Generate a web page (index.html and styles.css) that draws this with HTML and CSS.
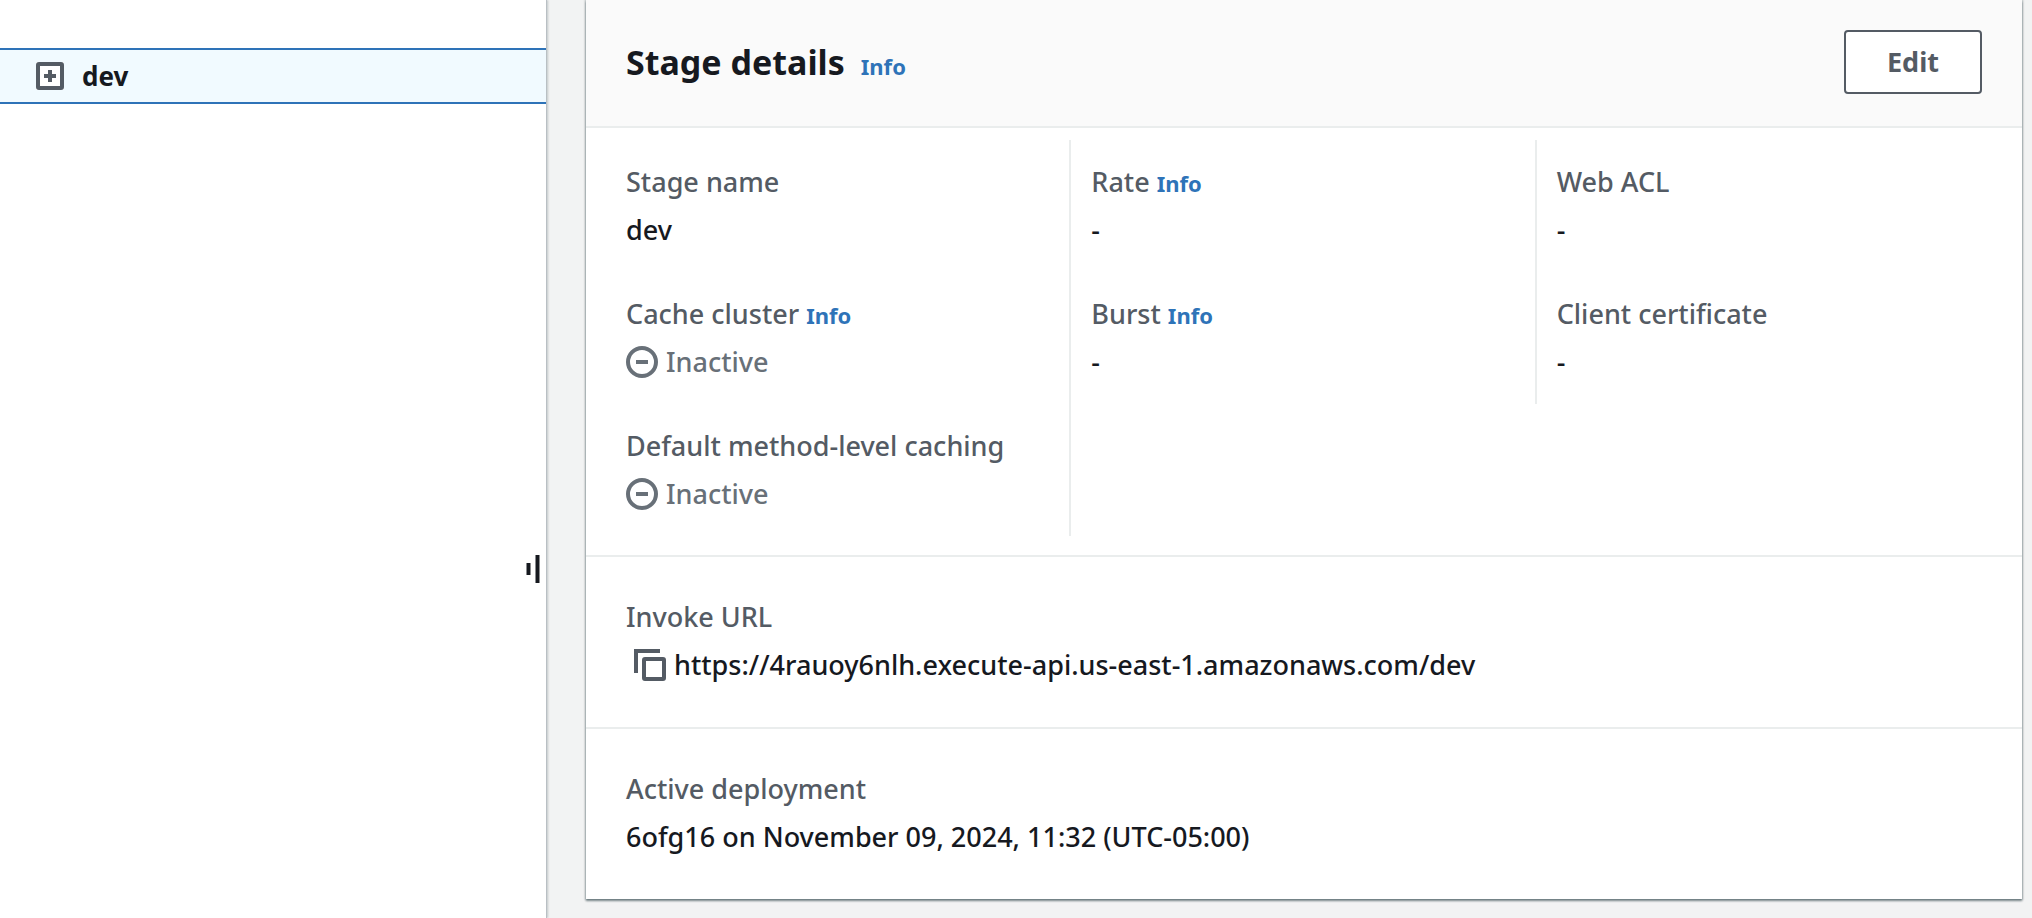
FILE: index.html
```html
<!DOCTYPE html>
<html lang="en">
<head>
<meta charset="utf-8">
<title>Stage details</title>
<link rel="stylesheet" href="styles.css">
</head>
<body>
<div class="layout">
  <nav class="sidebar" aria-label="Stages">
    <div class="stage-row">
      <button class="icon-button" type="button" aria-label="Expand dev">
        <svg class="expand-icon" viewBox="0 0 28 28" aria-hidden="true">
          <rect x="2" y="2" width="24" height="24" rx="1" fill="none" stroke="currentColor" stroke-width="4"/>
          <path d="M8 14h12M14 8v12" stroke="currentColor" stroke-width="4"/>
        </svg>
      </button>
      <a class="stage-link" href="#dev">dev</a>
    </div>
    <button class="resize-handle" type="button" aria-label="Resize panel">
      <svg class="resize-icon" viewBox="0 0 14 30" aria-hidden="true">
        <path d="M2.5 9v12M11.500 1v28" stroke="currentColor" stroke-width="4"/>
      </svg>
    </button>
  </nav>
  <main class="content">
    <section class="card">
      <header class="card-header">
        <div class="card-heading">
          <h2 class="card-title">Stage details</h2>
          <a class="info" href="#info">Info</a>
        </div>
        <button class="edit-button" type="button">Edit</button>
      </header>
      <div class="columns">
        <dl class="column">
          <div class="field"><dt>Stage name</dt><dd>dev</dd></div>
          <div class="field"><dt>Cache cluster <a class="info" href="#cache-info">Info</a></dt>
            <dd class="status">
              <svg class="status-icon" viewBox="0 0 32 32" aria-hidden="true"><circle cx="16" cy="16" r="14" fill="none" stroke="currentColor" stroke-width="4"/><path d="M10 16h12" stroke="currentColor" stroke-width="4"/></svg>
              Inactive</dd></div>
          <div class="field"><dt>Default method-level caching</dt>
            <dd class="status">
              <svg class="status-icon" viewBox="0 0 32 32" aria-hidden="true"><circle cx="16" cy="16" r="14" fill="none" stroke="currentColor" stroke-width="4"/><path d="M10 16h12" stroke="currentColor" stroke-width="4"/></svg>
              Inactive</dd></div>
        </dl>
        <dl class="column">
          <div class="field"><dt>Rate <a class="info" href="#rate-info">Info</a></dt><dd>-</dd></div>
          <div class="field"><dt>Burst <a class="info" href="#burst-info">Info</a></dt><dd>-</dd></div>
        </dl>
        <dl class="column">
          <div class="field"><dt>Web ACL</dt><dd>-</dd></div>
          <div class="field"><dt>Client certificate</dt><dd>-</dd></div>
        </dl>
      </div>
      <dl class="section">
        <dt>Invoke URL</dt>
        <dd class="copy-value">
          <button class="icon-button" type="button" aria-label="Copy invoke URL">
            <svg class="copy-icon" viewBox="0 0 32 32" aria-hidden="true">
              <path d="M2 24V2h24" fill="none" stroke="currentColor" stroke-width="4"/>
              <rect x="10" y="10" width="20" height="20" rx="1" fill="none" stroke="currentColor" stroke-width="4"/>
            </svg>
          </button>
          <span>https://4rauoy6nlh.execute-api.us-east-1.amazonaws.com/dev</span>
        </dd>
      </dl>
      <dl class="section">
        <dt>Active deployment</dt>
        <dd>6ofg16 on November 09, 2024, 11:32 (UTC-05:00)</dd>
      </dl>
    </section>
  </main>
</div>
</body>
</html>
```
FILE: styles.css
```css
* {
  box-sizing: border-box;
}

body {
  margin: 0;
  background: #f2f3f3;
  color: #16191f;
  font: 500 27px/44px "Noto Sans", "Open Sans", sans-serif;
}

a {
  text-decoration: none;
}

svg {
  display: block;
}

dl,
dd,
h2 {
  margin: 0;
}

.layout {
  display: grid;
  grid-template-columns: 547px 1fr;
  min-height: 100vh;
}

.sidebar {
  position: relative;
  padding-top: 48px;
  background: #fff;
  border-right: 1px solid #b9bfc4;
  box-shadow: 1px 0 2px rgba(0, 28, 36, 0.2);
}

.stage-row {
  display: flex;
  align-items: center;
  gap: 18px;
  height: 56px;
  padding: 0 36px;
  border-top: 2px solid #2e73b8;
  border-bottom: 2px solid #2e73b8;
  background: #f1faff;
}

.icon-button {
  padding: 0;
  border: 0;
  background: none;
  color: #545b64;
}

.expand-icon {
  width: 28px;
  height: 28px;
  background: #fff;
}

.stage-link {
  color: #16191f;
  font-size: 26px;
  font-weight: 700;
}

.resize-handle {
  position: absolute;
  top: 62%;
  right: 6px;
  padding: 0;
  border: 0;
  background: none;
  color: #16191f;
  transform: translateY(-50%);
}

.resize-icon {
  width: 14px;
  height: 30px;
}

.content {
  padding: 0 10px 18px 39px;
}

.card {
  background: #fff;
  box-shadow: 0 2px 2px rgba(0, 28, 36, 0.45), 0 0 2px 1px rgba(0, 28, 36, 0.25);
}

.card-header {
  display: flex;
  align-items: center;
  justify-content: space-between;
  padding: 30px 40px 32px;
  border-bottom: 2px solid #eaeded;
  background: #fafafa;
}

.card-heading {
  display: flex;
  align-items: baseline;
  gap: 16px;
}

.card-title {
  font-size: 34px;
  font-weight: 700;
}

.info {
  color: #2e73b8;
  font-size: 22px;
  font-weight: 700;
  line-height: 24px;
}

.edit-button {
  min-width: 138px;
  height: 64px;
  border: 2px solid #545b64;
  border-radius: 4px;
  background: #fff;
  color: #545b64;
  font: inherit;
  font-weight: 700;
}

.columns {
  display: grid;
  grid-template-columns: repeat(3, 1fr);
  align-items: start;
  padding: 12px 20px 19px;
}

.column {
  border-right: 2px solid #eaeded;
}

.column:last-child {
  border-right: 0;
}

.field {
  padding: 20px;
}

dt {
  margin-bottom: 4px;
  color: #545b64;
}

.status {
  display: flex;
  align-items: center;
  gap: 8px;
  color: #687078;
}

.status-icon,
.copy-icon {
  width: 32px;
  height: 32px;
}

.section {
  padding: 38px 40px 40px;
  border-top: 2px solid #eaeded;
}

.copy-value {
  display: flex;
  align-items: center;
  gap: 8px;
  padding-left: 8px;
}
```
